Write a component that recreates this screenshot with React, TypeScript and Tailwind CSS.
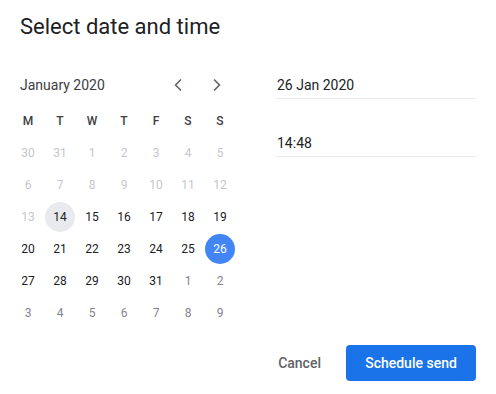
import { ChevronLeft, ChevronRight } from 'lucide-react'

type Day = { n: number; kind: 'past' | 'cur' | 'next' | 'today' | 'sel' }

const rows: Day[][] = [
  [30, 31, 1, 2, 3, 4, 5].map((n) => ({ n, kind: 'past' as const })),
  [6, 7, 8, 9, 10, 11, 12].map((n) => ({ n, kind: 'past' as const })),
  [
    { n: 13, kind: 'past' },
    { n: 14, kind: 'today' },
    { n: 15, kind: 'cur' },
    { n: 16, kind: 'cur' },
    { n: 17, kind: 'cur' },
    { n: 18, kind: 'cur' },
    { n: 19, kind: 'cur' },
  ],
  [
    { n: 20, kind: 'cur' },
    { n: 21, kind: 'cur' },
    { n: 22, kind: 'cur' },
    { n: 23, kind: 'cur' },
    { n: 24, kind: 'cur' },
    { n: 25, kind: 'cur' },
    { n: 26, kind: 'sel' },
  ],
  [
    { n: 27, kind: 'cur' },
    { n: 28, kind: 'cur' },
    { n: 29, kind: 'cur' },
    { n: 30, kind: 'cur' },
    { n: 31, kind: 'cur' },
    { n: 1, kind: 'next' },
    { n: 2, kind: 'next' },
  ],
  [3, 4, 5, 6, 7, 8, 9].map((n) => ({ n, kind: 'next' as const })),
]

const weekdays = ['M', 'T', 'W', 'T', 'F', 'S', 'S']

function DayCell({ day }: { day: Day }) {
  const base = 'w-[30px] h-[30px] rounded-full flex items-center justify-center text-[12px]'
  const styles: Record<Day['kind'], string> = {
    past: 'text-[#c4c7cb]',
    cur: 'text-[#202124]',
    next: 'text-[#80868b]',
    today: 'bg-[#e8eaed] text-[#202124]',
    sel: 'bg-[#4285f4] text-white',
  }
  return (
    <div className="w-8 h-8 flex items-center justify-center">
      <div className={`${base} ${styles[day.kind]}`}>{day.n}</div>
    </div>
  )
}

export default function App() {
  return (
    <div
      className="w-[496px] h-[394px] bg-white text-[#202124]"
      style={{ fontFamily: 'Roboto, "Noto Sans", sans-serif' }}
    >
      <h1 className="pl-5 pt-[13px] text-[22px] leading-7 text-[#202124]">Select date and time</h1>

      <div className="flex mt-7">
        <div className="ml-3 w-[224px]">
          <div className="h-8 flex items-center">
            <span className="pl-2 text-[14px] text-[#3c4043]">January 2020</span>
            <div className="ml-auto mr-[3px] flex gap-[7px]">
              <button className="w-8 h-8 flex items-center justify-center text-[#5f6368]">
                <ChevronLeft size={20} strokeWidth={2} />
              </button>
              <button className="w-8 h-8 flex items-center justify-center text-[#5f6368]">
                <ChevronRight size={20} strokeWidth={2} />
              </button>
            </div>
          </div>

          <div className="grid grid-cols-7 mt-1">
            {weekdays.map((d, i) => (
              <div key={i} className="w-8 h-8 flex items-center justify-center text-[12px] font-medium text-[#3c4043]">
                {d}
              </div>
            ))}
          </div>
          {rows.map((row, r) => (
            <div key={r} className="grid grid-cols-7">
              {row.map((day, i) => (
                <DayCell key={i} day={day} />
              ))}
            </div>
          ))}
        </div>

        <div className="ml-10 w-[200px]">
          <div className="pt-[6px] pb-[3px] border-b border-[#e8eaed] pl-px text-[14px] leading-5 text-[#202124]">
            26 Jan 2020
          </div>
          <div className="mt-7 pt-[6px] pb-[3px] border-b border-[#e8eaed] pl-px text-[14px] leading-5 text-[#202124]">
            14:48
          </div>
        </div>
      </div>

      <div className="flex justify-end items-center gap-[9px] pr-5 mt-4">
        <button className="h-9 px-4 text-[14px] font-medium text-[#5f6368]">Cancel</button>
        <button className="h-9 w-[130px] rounded bg-[#1a73e8] text-[14px] font-medium text-white">
          Schedule send
        </button>
      </div>
    </div>
  )
}
